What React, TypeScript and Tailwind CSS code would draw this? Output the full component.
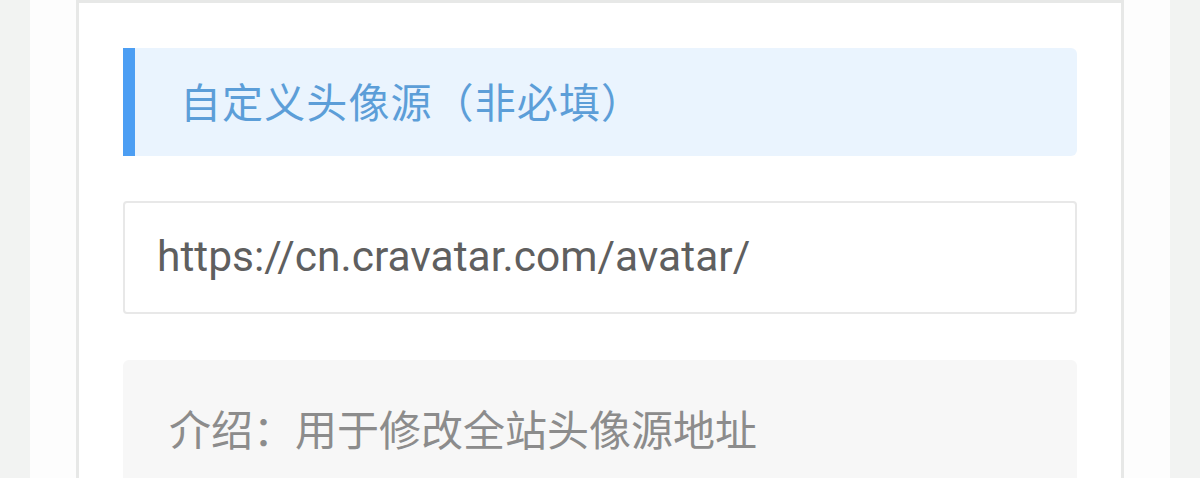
export default function App() {
  return (
    <div
      className="h-[478px] overflow-hidden bg-[#f2f3f2] px-[30px]"
      style={{ fontFamily: '"Noto Sans CJK SC", sans-serif' }}
    >
      <div className="h-full bg-[#fdfdfd] px-[46px]">
        <div className="h-full border-x-[3px] border-t-[3px] border-[#e7e8e7] bg-white px-[44px] pt-[45px]">
          {/* title */}
          <div className="flex h-[108px] items-center rounded-r-md border-l-[12px] border-[#4c9ef3] bg-[#eaf4fe] pb-[4px] pl-[45px]">
            <span className="text-[41px] leading-none tracking-[1.1px] text-[#5c9ed8]">
              自定义头像源（非必填）
            </span>
          </div>

          {/* avatar source input */}
          <div className="mt-[45px] flex h-[113px] items-center rounded border-2 border-[#e8e8e8] bg-white pl-[32px]">
            <span
              className="text-[42.5px] leading-none text-[#5f5f5f]"
              style={{ fontFamily: 'Roboto, "Noto Sans CJK SC", sans-serif' }}
            >
              https://cn.cravatar.com/avatar/
            </span>
          </div>

          {/* description */}
          <div className="mt-[46px] flex h-[140px] items-start rounded-md bg-[#f7f7f7] pl-[46px] pt-[47px]">
            <span className="text-[42px] leading-none text-[#8c8c8c]">
              介绍：用于修改全站头像源地址
            </span>
          </div>
        </div>
      </div>
    </div>
  );
}
